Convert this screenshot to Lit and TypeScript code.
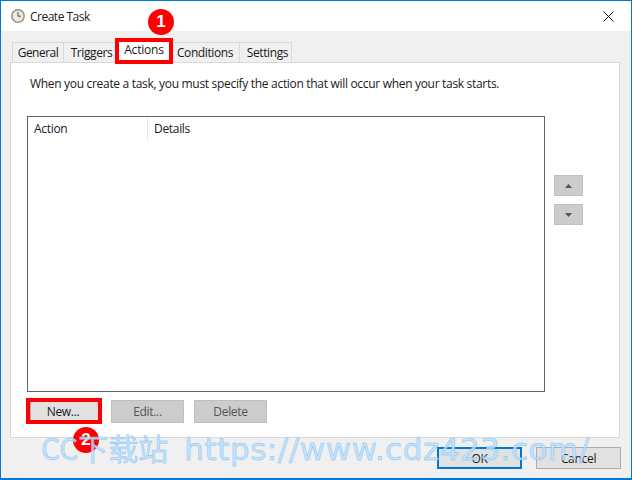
import { LitElement, html, css } from "lit";
import { customElement } from "lit/decorators.js";

@customElement("app-root")
export class AppRoot extends LitElement {
  static styles = css`
    :host { display: block; width: 632px; height: 480px; position: relative; overflow: hidden; font-family: "Open Sans", "Noto Sans", sans-serif; font-size: 12px; color: #1a1a1a; letter-spacing: -0.31px; }
    .win { box-sizing: border-box; width: 632px; height: 480px; border: 1px solid #0078d7; border-bottom-width: 2px; background: #f0f0f0; display: flex; flex-direction: column; }
    .title { height: 30px; background: #fff; display: flex; align-items: center; padding: 0 0 0 10px; gap: 5px; flex: none; letter-spacing: -0.5px; }
    .title span { flex: 1; }
    .close { width: 46px; display: flex; justify-content: center; }
    .tabs { display: flex; padding: 11px 0 0 11px; height: 20px; box-sizing: content-box; flex: none; letter-spacing: -0.4px; }
    .tab { box-sizing: border-box; height: 20px; margin-top: 0; border: 1px solid #d9d9d9; border-bottom: 0; border-left-width: 0; background: #f0f0f0; display: flex; align-items: center; justify-content: center; }
    .tab:first-child { border-left-width: 1px; letter-spacing: -0.5px; }
    .tab.shift { padding-left: 4px; }
    .tab.cond { padding-right: 2px; }
    .tab.sel { background: #fff; height: 22px; margin-top: -2px; padding-bottom: 4px; letter-spacing: -0.2px; position: relative; }
    .panel { box-sizing: border-box; margin-left: 9px; width: 610px; height: 376px; background: #fff; border: 1px solid #d9d9d9; padding: 13px 16px 0; flex: none; }
    .intro { height: 40px; padding-left: 3px; line-height: 16px; }
    .mid { display: flex; gap: 9px; }
    .list { box-sizing: border-box; width: 518px; height: 276px; border: 1px solid #646464; background: #fff; }
    .head { display: flex; height: 23px; }
    .head div { height: 100%; display: flex; align-items: center; padding-left: 6px; box-sizing: border-box; }
    .head .a { width: 120px; border-right: 1px solid #e5e5e5; }
    .side { display: flex; flex-direction: column; gap: 8px; padding-top: 59px; }
    .btn { box-sizing: border-box; border: 1px solid #adadad; background: #e1e1e1; display: flex; align-items: center; justify-content: center; }
    .btn.dis { background: #cccccc; border-color: #bfbfbf; color: #555; }
    .arrow { width: 29px; height: 21px; }
    .acts { display: flex; gap: 10px; padding: 8px 0 0 3px; }
    .acts .btn { width: 73px; height: 23px; }
    .acts .new { width: 71px; padding-right: 5px; }
    .foot { display: flex; justify-content: flex-end; gap: 14px; padding: 9px 10px 0 0; }
    .foot .btn { width: 85px; height: 22px; }
    .foot .ok { border: 2px solid #0078d7; }
    .mark { position: absolute; box-sizing: border-box; border: 4px solid #f00; }
    .m1 { left: 115px; top: 38px; width: 58px; height: 26px; }
    .m2 { left: 26px; top: 398px; width: 76px; height: 26px; }
    .badge { position: absolute; width: 26px; height: 26px; border-radius: 50%; background: #f00; color: #fff; font: bold 17px "Liberation Sans", sans-serif; display: flex; align-items: center; justify-content: center; letter-spacing: 0; }
    .b1 { left: 148px; top: 9px; }
    .b2 { left: 73px; top: 427px; }
    .wm { position: absolute; left: 41px; top: 427px; white-space: nowrap; font: 31px/40px "DejaVu Sans", sans-serif; letter-spacing: 0.55px; color: #bfe1fc; -webkit-text-stroke: 0.5px #74bdf6; opacity: 0.85; display: flex; align-items: baseline; gap: 16px; }
    .wm .cjk { font-family: "Noto Sans CJK SC", sans-serif; font-size: 30px; letter-spacing: 0; }
  `;

  render() {
    const tabs: [string, number, string][] = [["General", 52, ""], ["Triggers", 52, "shift"], ["Actions", 57, "sel"], ["Conditions", 67, "cond"], ["Settings", 52, "shift"]];
    return html`
      <div class="win">
        <div class="title">
          <svg width="14" height="14" viewBox="0 0 14 14">
            <circle cx="7" cy="7" r="6.2" fill="#efe9d6" stroke="#8a8f94" stroke-width="1.4"/>
            <path d="M7 3v4.200h3" fill="none" stroke="#555" stroke-width="1"/>
          </svg>
          <span>Create Task</span>
          <div class="close">
            <svg width="11" height="11" viewBox="0 0 11 11"><path d="M.5.5l10 10M10.500.5l-10 10" stroke="#111" fill="none"/></svg>
          </div>
        </div>
        <div class="tabs">
          ${tabs.map(([t, w, c]) => html`<div class="tab ${c}" style="width:${w}px">${t}</div>`)}
        </div>
        <div class="panel">
          <div class="intro">When you create a task, you must specify the action that will occur when your task starts.</div>
          <div class="mid">
            <div class="list"><div class="head"><div class="a">Action</div><div>Details</div></div></div>
            <div class="side">
              <div class="btn dis arrow"><svg width="7" height="4" viewBox="0 0 7 4"><path d="M3.500 0L7 4H0z" fill="#555"/></svg></div>
              <div class="btn dis arrow"><svg width="7" height="4" viewBox="0 0 7 4"><path d="M0 0h7L3.500 4z" fill="#555"/></svg></div>
            </div>
          </div>
          <div class="acts">
            <div class="btn new">New...</div>
            <div class="btn dis">Edit...</div>
            <div class="btn dis">Delete</div>
          </div>
        </div>
        <div class="foot">
          <div class="btn ok">OK</div>
          <div class="btn">Cancel</div>
        </div>
      </div>
      <div class="mark m1"></div>
      <div class="mark m2"></div>
      <div class="badge b1">1</div>
      <div class="badge b2">2</div>
      <div class="wm"><span class="cjk">CC下载站</span><span>https://www.cdz423.com/</span></div>
    `;
  }
}
